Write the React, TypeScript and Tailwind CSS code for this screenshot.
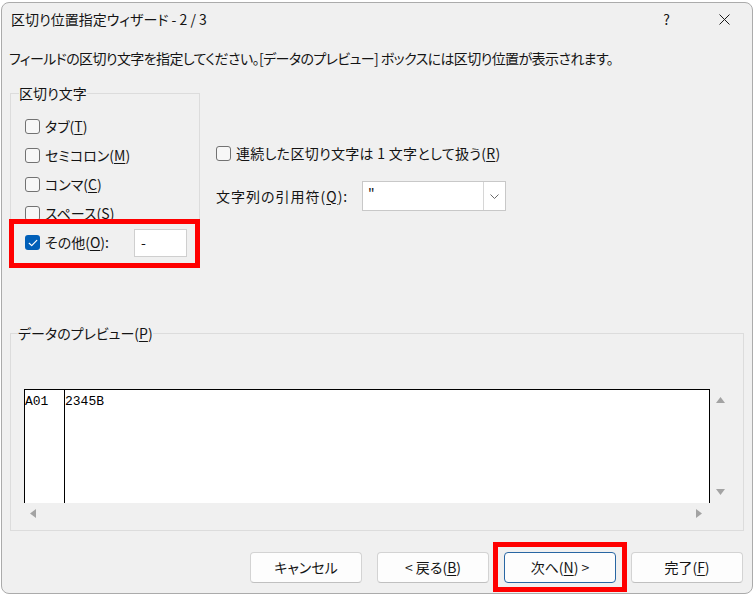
import React from 'react'

function Box({ checked = false }: { checked?: boolean }) {
  if (checked) {
    return (
      <span className="flex h-[15px] w-[15px] shrink-0 items-center justify-center rounded-[3px] bg-[#005fb8]">
        <svg width="10" height="8" viewBox="0 0 10 8" fill="none">
          <path d="M1.2 4.3 3.7 6.6 8.8 1.4" stroke="#fff" strokeWidth="1.2" strokeLinecap="round" strokeLinejoin="round" />
        </svg>
      </span>
    )
  }
  return <span className="h-[15px] w-[15px] shrink-0 rounded-[3px] border border-[#727272] bg-[#f7f7f7]" />
}

function Key({ k }: { k: string }) {
  return <span className="underline decoration-1 underline-offset-[2px]">{k}</span>
}

function Option({ label, k, tail = ')', checked }: { label: string; k: string; tail?: string; checked?: boolean }) {
  return (
    <div className="flex h-[29px] items-center gap-[5px]">
      <Box checked={checked} />
      <span>
        {label}(<Key k={k} />{tail}
      </span>
    </div>
  )
}

function Button({ children, primary }: { children: React.ReactNode; primary?: boolean }) {
  return (
    <div
      className={
        primary
          ? 'flex h-[31px] w-[112px] items-center justify-center rounded-[4px] border border-[#2866a3] bg-[#fdfdfd]'
          : 'flex h-[31px] w-[112px] items-center justify-center rounded-[4px] border border-[#d3d3d3] border-b-[#c0c0c0] bg-[#fdfdfd]'
      }
    >
      {children}
    </div>
  )
}

const tri = 'fill-[#a3a3a3]'

export default function App() {
  return (
    <div className="h-[595px] w-[755px] bg-white pt-[2px] pr-[2px] pb-[1px] pl-[1px] font-['Noto_Sans_CJK_JP',sans-serif] text-[14px] text-[#141414] [font-feature-settings:'palt']">
      <div className="flex h-full flex-col rounded-[8px] border border-[#ababab] bg-[#f0f0f0]">
        {/* title bar */}
        <div className="flex h-[33px] shrink-0 items-center pl-[9px]">
          <span>区切り位置指定ウィザード - 2 / 3</span>
          <div className="ml-auto flex h-full">
            <span className="flex w-[56px] items-center justify-center pr-[3px]">?</span>
            <span className="flex w-[56px] items-center justify-center">
              <svg width="11" height="11" viewBox="0 0 11 11">
                <path d="M0.5 0.5 10.5 10.5M10.5 0.5 0.5 10.5" stroke="#1a1a1a" strokeWidth="1" />
              </svg>
            </span>
          </div>
        </div>

        <p className="mt-[12px] h-[20px] pl-[7px] leading-[20px] tracking-[-0.6px]">
          フィールドの区切り文字を指定してください。[データのプレビュー] ボックスには区切り位置が表示されます。
        </p>

        <div className="mt-[15px] flex items-start px-[8px]">
          <fieldset className="w-[190px] border border-[#dcdcdc] px-0">
            <legend className="ml-[8px] px-0 leading-[20px]">区切り文字</legend>
            <div className="pt-[9px] pr-[10px] pb-[8px] pl-[14px]">
              <Option label="タブ" k="T" />
              <Option label="セミコロン" k="M" />
              <Option label="コンマ" k="C" />
              <Option label="スペース" k="S" />
              <div className="relative flex h-[29px] items-center gap-[5px]">
                <Box checked />
                <span>
                  その他(<Key k="O" />):
                </span>
                <div className="mr-[2px] ml-auto flex h-[28px] w-[53px] items-center border border-[#cfcfcf] bg-white pl-[6px]">
                  -
                </div>
                <div className="pointer-events-none absolute -top-[9px] -right-[11px] -bottom-[11px] -left-[16px] border-[5px] border-[#ff0000]" />
              </div>
            </div>
          </fieldset>

          <div className="ml-[16px] pt-[60px]">
            <div className="flex h-[20px] items-center gap-[5px]">
              <Box />
              <span className="tracking-[0.3px]">
                連続した区切り文字は 1 文字として扱う(<Key k="R" />)
              </span>
            </div>
            <div className="mt-[18px] flex h-[30px] items-center">
              <span className="w-[146px] tracking-[1px]">
                文字列の引用符(<Key k="Q" />):
              </span>
              <div className="flex h-[30px] w-[144px] border border-[#c8c8c8] bg-white">
                <span className="flex-1 pl-[5px] leading-[22px]">"</span>
                <span className="flex w-[22px] items-center justify-center border-l border-[#d6d6d6]">
                  <svg width="9" height="5" viewBox="0 0 9 5" fill="none">
                    <path d="M0.5 0.5 4.5 4.5 8.5 0.5" stroke="#6a6a6a" strokeWidth="1" />
                  </svg>
                </span>
              </div>
            </div>
          </div>
        </div>

        <fieldset className="mx-[8px] mt-[57px] border border-[#dcdcdc] px-0">
          <legend className="ml-[7px] px-0 leading-[20px]">
            データのプレビュー(<Key k="P" />)
          </legend>
          <div className="pt-[46px] pb-[7px] pl-[13px]">
            <div className="flex h-[114px]">
              <div className="flex w-[686px] border-x border-t border-black bg-white font-['Liberation_Mono',monospace] text-[13px] leading-[14px] text-black">
                <div className="w-[40px] border-r border-black pt-[5px]">A01</div>
                <div className="pt-[5px]">2345B</div>
              </div>
              <div className="flex w-[21px] flex-col items-center justify-between py-[8px]">
                <svg width="9" height="6" viewBox="0 0 9 6">
                  <path d="M4.5 0 9 6 0 6Z" className={tri} />
                </svg>
                <svg width="9" height="6" viewBox="0 0 9 6">
                  <path d="M0 0 9 0 4.5 6Z" className={tri} />
                </svg>
              </div>
            </div>
            <div className="flex h-[20px] w-[686px] items-center justify-between pr-[8px] pl-[6px]">
              <svg width="6" height="9" viewBox="0 0 6 9">
                <path d="M6 0 6 9 0 4.5Z" className={tri} />
              </svg>
              <svg width="6" height="9" viewBox="0 0 6 9">
                <path d="M0 0 6 4.5 0 9Z" className={tri} />
              </svg>
            </div>
          </div>
        </fieldset>

        <div className="mt-[21px] flex justify-end gap-[15px] pr-[9px]">
          <Button>キャンセル</Button>
          <Button>
            &lt; 戻る(<Key k="B" />)
          </Button>
          <div className="relative">
            <Button primary>
              次へ(<Key k="N" />) &gt;
            </Button>
            <div className="pointer-events-none absolute -top-[10px] -right-[11px] -bottom-[9px] -left-[11px] border-[5px] border-[#ff0000]" />
          </div>
          <Button>
            完了(<Key k="F" />)
          </Button>
        </div>
      </div>
    </div>
  )
}
